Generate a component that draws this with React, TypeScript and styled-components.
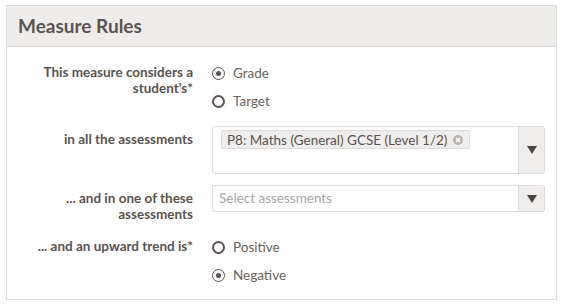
import styled, { createGlobalStyle } from "styled-components";

const GlobalStyle = createGlobalStyle`
  body {
    margin: 0;
    padding: 5px 10px 0 6px;
    background: #fff;
    font-family: "Lato", "Open Sans", sans-serif;
    color: #5a5350;
  }
`;

const Panel = styled.section`
  border: 1px solid #dcdbd9;
  width: 551px;
  box-sizing: border-box;
`;

const Header = styled.header`
  background: #eeedeb;
  border-bottom: 1px solid #dcdbd9;
  padding: 8px 10px 8px 11px;
  font-size: 19px;
  font-weight: 700;
  line-height: 24px;
  color: #5a5350;
`;

const Body = styled.div`
  display: flex;
  flex-direction: column;
  gap: 11px;
  padding: 12px 11px 10px 0;
`;

const Row = styled.div`
  display: grid;
  grid-template-columns: 186px 1fr;
  column-gap: 19px;
  align-items: start;
`;

const Label = styled.div`
  text-align: right;
  font-size: 13.5px;
  font-weight: 700;
  line-height: 16px;
  padding-top: 5px;
  color: #5a5350;
`;

const RadioList = styled.div`
  display: flex;
  flex-direction: column;
`;

const RadioItem = styled.label`
  display: flex;
  align-items: center;
  gap: 8px;
  height: 28px;
  font-size: 13.5px;
  color: #6a6360;
`;

const RadioMark = styled.span<{ $checked?: boolean }>`
  width: 13px;
  height: 13px;
  box-sizing: border-box;
  border-radius: 50%;
  border: ${(p) => (p.$checked ? "1.5px" : "2px")} solid #5a5350;
  display: flex;
  align-items: center;
  justify-content: center;

  &::after {
    content: "";
    width: 5px;
    height: 5px;
    border-radius: 50%;
    background: #5a5350;
    display: ${(p) => (p.$checked ? "block" : "none")};
  }
`;

const Select = styled.div<{ $tall?: boolean }>`
  display: flex;
  border: 1px solid #dddcda;
  border-radius: 3px;
  height: ${(p) => (p.$tall ? "48px" : "27px")};
  box-sizing: border-box;
  background: #fff;
`;

const SelectValue = styled.div`
  flex: 1;
  padding: 3px 8px;
  display: flex;
  align-items: flex-start;
`;

const Placeholder = styled.span`
  font-size: 13.5px;
  line-height: 19px;
  color: #a8a6a4;
  margin-left: -2px;
`;

const Tag = styled.span`
  display: inline-flex;
  align-items: center;
  gap: 6px;
  background: #efeeed;
  border: 1px solid #dddcda;
  border-radius: 2px;
  padding: 0 6px 0 5px;
  height: 19px;
  box-sizing: border-box;
  font-size: 13.5px;
  color: #5a5350;
`;

const Clear = styled.span`
  width: 10px;
  height: 10px;
  border-radius: 50%;
  background: #b9b7b5;
  display: flex;
  align-items: center;
  justify-content: center;
`;

const Toggle = styled.div`
  width: 25px;
  background: #efeeed;
  border-left: 1px solid #dddcda;
  border-radius: 0 2px 2px 0;
  display: flex;
  align-items: center;
  justify-content: center;

  &::after {
    content: "";
    border-left: 5px solid transparent;
    border-right: 5px solid transparent;
    border-top: 8px solid #4a4543;
  }
`;

const Radio = ({ label, checked }: { label: string; checked?: boolean }) => (
  <RadioItem>
    <RadioMark $checked={checked} />
    {label}
  </RadioItem>
);

const App = () => {
  return (
    <>
      <GlobalStyle />
      <Panel>
        <Header>Measure Rules</Header>
        <Body>
          <Row>
            <Label>
              This measure considers a
              <br />
              student's*
            </Label>
            <RadioList>
              <Radio label="Grade" checked />
              <Radio label="Target" />
            </RadioList>
          </Row>
          <Row>
            <Label>in all the assessments</Label>
            <Select $tall>
              <SelectValue>
                <Tag>
                  P8: Maths (General) GCSE (Level 1/2)
                  <Clear>
                    <svg width="6" height="6" viewBox="0 0 6 6">
                      <path d="M1 1L5 5M5 1L1 5" stroke="#fff" strokeWidth="1.4" />
                    </svg>
                  </Clear>
                </Tag>
              </SelectValue>
              <Toggle />
            </Select>
          </Row>
          <Row>
            <Label>
              ... and in one of these
              <br />
              assessments
            </Label>
            <Select>
              <SelectValue>
                <Placeholder>Select assessments</Placeholder>
              </SelectValue>
              <Toggle />
            </Select>
          </Row>
          <Row>
            <Label>... and an upward trend is*</Label>
            <RadioList>
              <Radio label="Positive" />
              <Radio label="Negative" checked />
            </RadioList>
          </Row>
        </Body>
      </Panel>
    </>
  );
};

export default App;
